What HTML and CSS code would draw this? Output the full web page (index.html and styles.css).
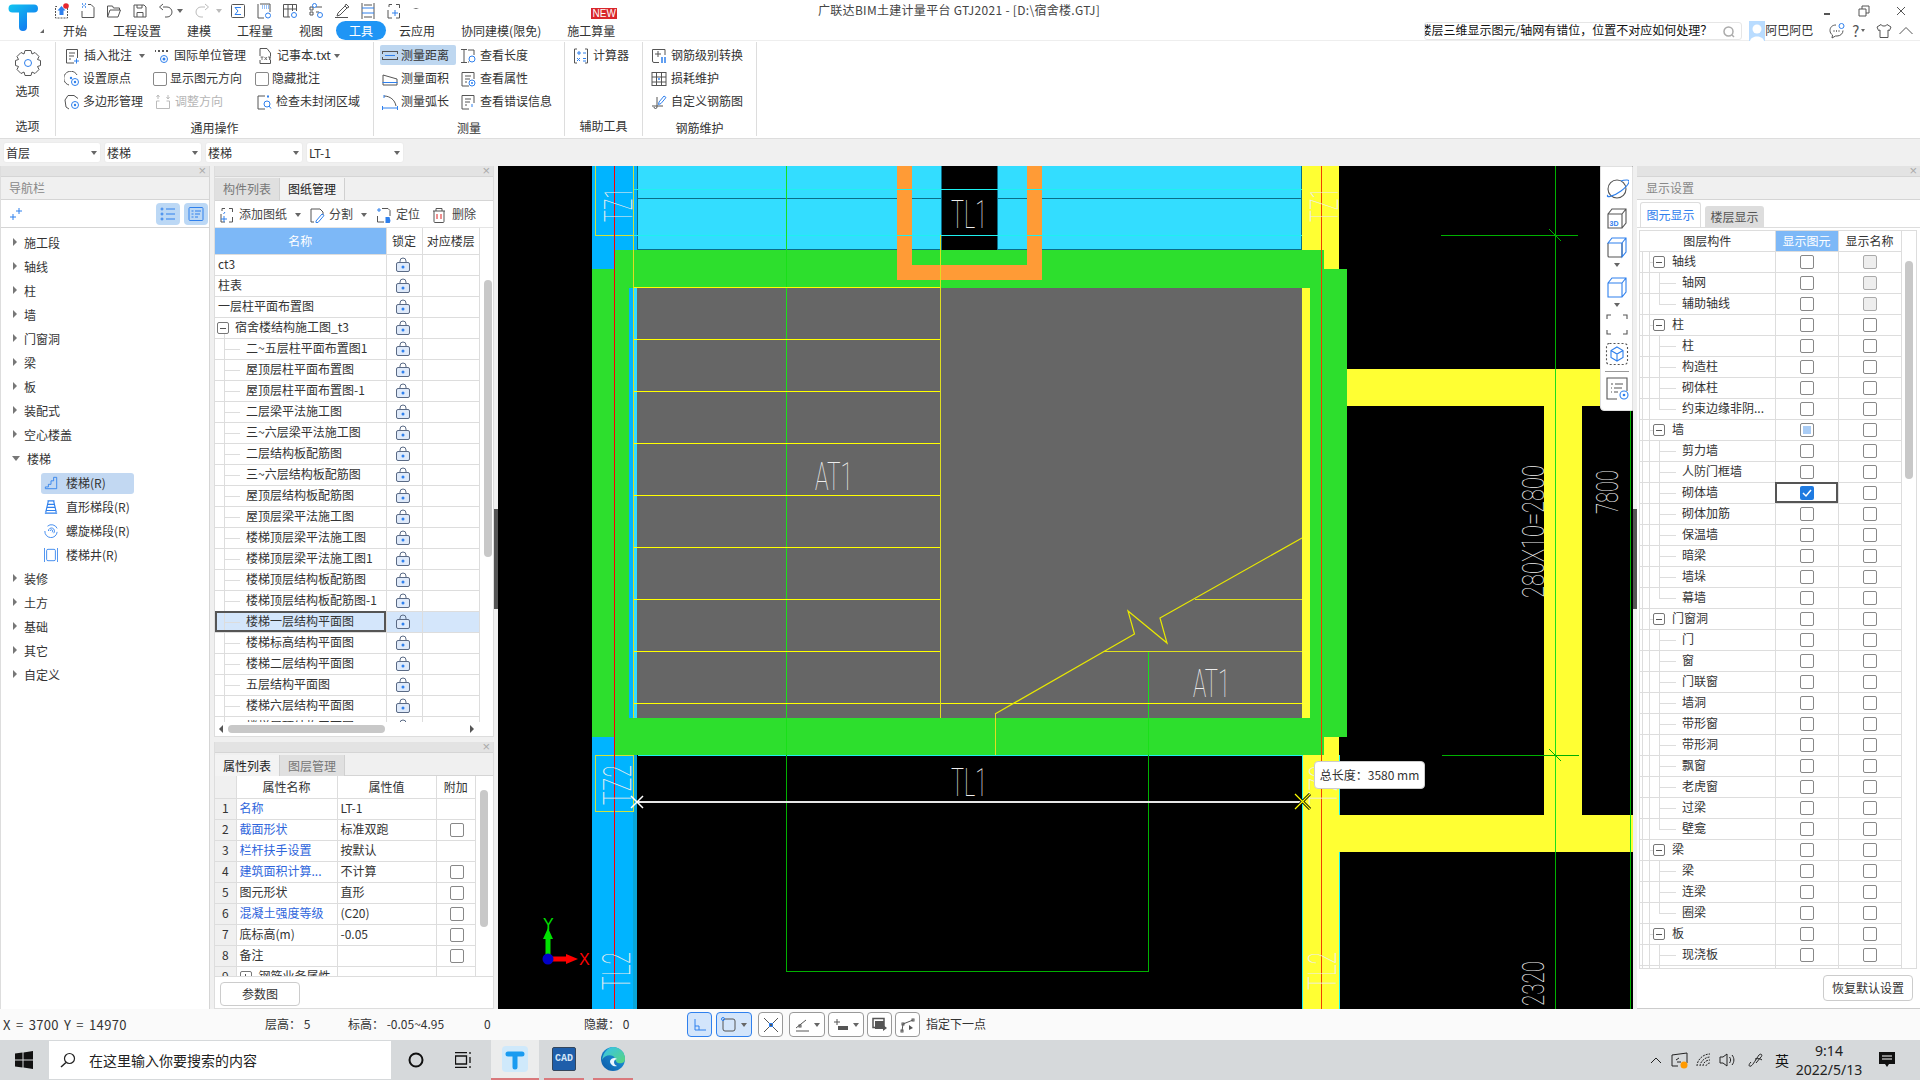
FILE: index.html
```html
<!DOCTYPE html>
<html lang="zh">
<head>
<meta charset="utf-8">
<title>广联达BIM土建计量平台 GTJ2021</title>
<link rel="stylesheet" href="styles.css">
</head>
<body>
<svg class="defs" width="0" height="0">
<defs>
<linearGradient id="tg" gradientUnits="userSpaceOnUse" x1="8" y1="4" x2="30" y2="32"><stop offset="0" stop-color="#12c8f0"/><stop offset="1" stop-color="#1272f0"/></linearGradient>
<linearGradient id="edge" x1="0" y1="1" x2="1" y2="0"><stop offset="0" stop-color="#0c59a4"/><stop offset="1" stop-color="#1fa0e8"/></linearGradient>
<linearGradient id="edgeg" x1="0" y1="0" x2="1" y2="1"><stop offset="0" stop-color="#35c1f1"/><stop offset="1" stop-color="#5ad67a"/></linearGradient>
<symbol id="lock" viewBox="0 0 14 15"><path class="ls" d="M4 6V4a3 3 0 0 1 6 0v2"/><rect class="lb" x=".5" y="5.5" width="13" height="9" rx="1.5"/><circle class="af" cx="7" cy="10" r="1.5"/></symbol>
<symbol id="note" viewBox="0 0 16 16"><path d="M10 15H2.500V1.500h11V10"/><path d="M5 5h6M5 8h5M5 11h2"/><path class="a" d="M12.500 10.500v5M10 13h5"/></symbol>
<symbol id="unit" viewBox="0 0 16 16"><circle class="a" cx="10" cy="11" r="3.500"/><circle class="af" cx="10" cy="11" r="1.500"/><path d="M1 3h1M4 3h2M8 3h2M12 3h2" stroke-width="2"/></symbol>
<symbol id="txt" viewBox="0 0 16 16"><path d="M3 15.500h10.500V5L10 .5H3z"/><path d="M1.500 8h12v4h-12z" fill="#fff" stroke="none"/><path d="M3.500 9h3M5 9v3M7.500 9l2.500 3M10 9l-2.500 3M11 9h3M12.500 9v3" stroke-width=".8"/></symbol>
<symbol id="origin" viewBox="0 0 16 16"><path d="M13 4A7 7 0 1 0 5 14"/><circle class="a" cx="11" cy="11" r="3.500"/><circle class="af" cx="11" cy="11" r="1.200"/><circle class="af" cx="7" cy="7" r="1.200"/></symbol>
<symbol id="poly" viewBox="0 0 16 16"><path d="M4 1.500h6l4 3M4 1.500 1 6l1 7 3 2"/><circle class="a" cx="11" cy="11" r="3.500"/><circle class="af" cx="11" cy="11" r="1.200"/></symbol>
<symbol id="adj" viewBox="0 0 16 16"><g style="stroke:#bbb"><path d="M1.500 7v7.500h13V7M1.500 7h3M11.500 7h3M3 1v4M1.500 3l1.500-2 1.500 2M13 1v4M11.500 3 13 5l1.500-2"/></g></symbol>
<symbol id="check" viewBox="0 0 16 16"><path d="M9 2H2v13h7"/><path d="M12 1.500v2" class="a" stroke-width="2"/><circle class="a" cx="11" cy="10" r="3"/><path class="a" d="m13 12 2 2.500"/></symbol>
<symbol id="dist" viewBox="0 0 16 16"><path d="M.5 4.500h15M.5 12.500h15"/><path d="M.5 4v3M15.500 4v3M.5 10v3M15.500 10v3"/><path class="a" d="M3 8.500h10"/></symbol>
<symbol id="len" viewBox="0 0 16 16"><path d="M1 1.500h6M1 14.500h6M4 1.500v13"/><path d="M8 2h6v5M8 14h1"/><circle class="a" cx="12" cy="11" r="3"/></symbol>
<symbol id="area" viewBox="0 0 16 16"><path d="M1 4v10h14V8z"/><path class="a" d="M.5 11.500h15"/></symbol>
<symbol id="prop" viewBox="0 0 16 16"><path d="M9 15H2V1.500h12V8"/><path d="M5 5h6M5 8h5M5 11h2"/><circle class="a" cx="12" cy="12" r="3"/><circle class="af" cx="12" cy="12" r="1"/></symbol>
<symbol id="arc" viewBox="0 0 16 16"><path d="M2 2c6 0 11 4 12 10"/><path class="a" d="M.5 14h15M.5 12v4M15.500 12v4M2 1v3"/></symbol>
<symbol id="err" viewBox="0 0 16 16"><path d="M14 9V1.500H2V15h7"/><path d="M5 5h6M5 8h5M5 11h2"/><path class="a" d="M12 10v3"/></symbol>
<symbol id="calc" viewBox="0 0 16 16"><path d="M4 1H1.500v14H4M12 1h2.500v14H12"/><path class="a" d="M6 3v4M4 5h4M10 5h3M4 10l3 3M7 10l-3 3M10 10.500h3M10 13h3"/></symbol>
<symbol id="grade" viewBox="0 0 16 16"><path d="M14 7V1.500H1.500V13a1.500 1.500 0 0 0 1.500 1.500h5"/><path d="M7 3v6M4 6h6"/><path class="a" d="M11 9v6M14 9v6" stroke-width="1.500"/></symbol>
<symbol id="grid" viewBox="0 0 16 16"><rect x="1" y="1.500" width="14" height="13"/><path d="M1 6h14M1 11h14M5.500 1.500v13M10.500 1.500v13"/><circle class="af" cx="8" cy="8" r="1"/></symbol>
<symbol id="rebar" viewBox="0 0 16 16"><path d="M6 3v10a1.500 1.500 0 0 1-3 0M1 12h11"/><path class="a" d="m8 8 5-6 2 1.500-5 6-2.500 1z"/></symbol>
<symbol id="addpg" viewBox="0 0 16 16"><path d="M3 4V1.500h3M10 1.500h3.500V5M13.500 10v5H10M6 15H2V7"/><path d="M6 5 4.500 7" class="a"/><path class="a" d="M5 9v6M2 12h6"/></symbol>
<symbol id="split" viewBox="0 0 16 16"><path d="M2 15V2h9l3 3v3M2 15h3"/><path class="a" d="m7 14 6-7 2 1.500-6 7H7z"/></symbol>
<symbol id="locate" viewBox="0 0 16 16"><path d="M6 1.500h6l2 2V9M1.500 9v6H8M14 15h-1"/><path class="a" d="M1 3h4M3 1v4"/><path class="af" d="M9.500 10h4l1 4-1 2h-4z"/></symbol>
<symbol id="del" viewBox="0 0 16 16"><path d="M2 4h12M5 4V1.500h6V4M3 4v10.500a1 1 0 0 0 1 1h8a1 1 0 0 0 1-1V4"/><path style="stroke:#e02020" d="M6 7v5M10 7v5"/></symbol>
<symbol id="stair" viewBox="0 0 16 16"><path class="a" d="M1.500 14.500h13V1.500h-3.500v4h-3v4h-3v3h-3.500z"/></symbol>
<symbol id="flight" viewBox="0 0 16 16"><path class="a" d="M4 1h8M5 1 2 14M11 1l3 13M1 15h14M4 5h8M3.500 8.500h9M2.500 12h11" stroke-width="1.300"/></symbol>
<symbol id="spiral" viewBox="0 0 16 16"><path class="a" d="M1 8a7 7 0 1 0 14 1M15 5a7 7 0 0 0-11-2.500M5 8a3.500 3.500 0 1 1 6 2.500M7 8a1.500 1.500 0 1 1 2 1.500"/></symbol>
<symbol id="well" viewBox="0 0 16 16"><path class="a" d="M.5 0v16M15.500 0v16"/><rect class="a" x="3" y="1.500" width="10" height="13" rx="1.500"/></symbol>
<symbol id="planet" viewBox="0 0 24 24"><circle cx="12" cy="12" r="9"/><path class="a" d="M3 18c-3 3 5 2 13-4s10-11 6-11-5 .5-6 1"/></symbol>
<symbol id="c3d" viewBox="0 0 24 24"><path d="M3 8h14v14H3zM3 8l4-5h14v14l-4 5M17 8l4-5"/><text class="t3d" x="4.500" y="20">3D</text></symbol>
<symbol id="cube" viewBox="0 0 24 24"><path d="M3 8v13a1 1 0 0 0 1 1h12a1 1 0 0 0 1-1V8"/><path class="a" d="M3 8l4-5h14v14l-4 5V8H3zM17 8l4-5"/></symbol>
<symbol id="cubef" viewBox="0 0 24 24"><path class="a" fill="#d3e5fb" d="M3 8l4-5h14v14l-4 5H3V8zM3 8h14v14M17 8l4-5"/></symbol>
<symbol id="corners" viewBox="0 0 24 24"><path d="M2 7V3h4M18 3h4v4M22 18v4h-4M6 22H2v-4"/></symbol>
<symbol id="cubed" viewBox="0 0 24 24"><rect x="1.500" y="1.500" width="21" height="21" rx="3" stroke-dasharray="2 2"/><path class="a" d="M12 5l6 3.500v7L12 19l-6-3.500v-7zM6 8.500l6 3.500 6-3.500M12 12v7"/></symbol>
<symbol id="report" viewBox="0 0 24 24"><path d="M12 23H2V2h20v13"/><path d="M6 8h2M10 8h8M6 12h1M9 12h8M6 16h1M9 16h4"/><circle class="a" cx="19" cy="19" r="4"/><circle class="af" cx="19" cy="19" r="1.300"/></symbol>
<symbol id="undo" viewBox="0 0 16 16"><path d="M6 4H10a5 5 0 0 1 0 10H8M6 1 2.500 4 6 7"/></symbol>
<symbol id="redo" viewBox="0 0 16 16"><g style="stroke:#bbb"><path d="M10 4H6a5 5 0 0 0 0 10h2M10 1l3.500 3L10 7"/></g></symbol>
</defs>
</svg>

<div class="app">
  <header class="top">
    <svg class="logo" viewBox="0 0 50 41" width="50" height="41"><path d="M12.500 8.500H34M23 9V27" fill="none" stroke="url(#tg)" stroke-width="8" stroke-linecap="round"/><path class="tiny" d="M40 33l4-4v4z"/></svg>
    <div class="top-main">
      <div class="qrow">
        <div class="quick">
          <span class="qi"><svg class="ic"><path d="M3 3.500H1.500V15h12V3.500H12" stroke-dasharray="2 1"/><path class="af" d="M7.500 3l4 4.500H9.500V12h-4V7.500h-2z"/><circle class="rd" cx="12" cy="3" r="2.800"/></svg></span>
          <span class="qi"><svg class="ic"><path d="M8 1.500h3l3 3v10H2V8"/><path class="a" d="M2 1h1M5 1h1M3.500 2.500h1M2 4h1M5 4h1" stroke-width="1.300"/></svg></span>
          <span class="qi"><svg class="ic"><path d="M1.500 14V3h5l1 2h6v2M1.500 14l2.500-7h10.500L12 14z"/></svg></span>
          <span class="qi"><svg class="ic"><path d="M2 2h10l2 2v10H2zM5 14V9.500h6V14M5 2v3h5V2"/></svg></span>
          <span class="qu"><svg class="ic"><use href="#undo"/></svg></span>
          <span class="qc"><i class="car"></i></span>
          <span class="qr"><svg class="ic"><use href="#redo"/></svg></span>
          <span class="qc2"><i class="car lt"></i></span>
          <span class="qi"><svg class="ic"><rect x="1.500" y="1.500" width="13" height="13" rx="1"/><path class="a" d="M11 4.500H5l3 3.500-3 3.500h6"/></svg></span>
          <span class="qi"><svg class="ic"><path d="M2 1v14h6M4 1h10v8"/><path class="a" d="M6 3h1M8 3h1M10 3h1M12 3h1M6 5h1M8 5h1M10 5h1M12 5h1"/><circle class="a" cx="12" cy="12.500" r="2.500"/></svg></span>
          <span class="qi"><svg class="ic"><path d="M8 14H1.500V1.500h13V8M1.500 6h13M6 1.500V14M10.500 1.500V8"/><circle class="a" cx="12" cy="12" r="2.500"/></svg></span>
          <span class="qi"><svg class="ic"><path d="M2 4h3v3H2zM2 9h3v3H2zM8 4h6M8 9h3"/><circle class="a" cx="6.500" cy="2.500" r="2"/><circle class="a" cx="12" cy="12" r="2.500"/></svg></span>
          <span class="qi"><svg class="ic"><path d="M1 14.500h13M3 13l1-3 7-7 2 2-7 7zM11 3l1-2 3 3-2 1"/></svg></span>
          <span class="qi"><svg class="ic"><path d="M2 0v16M14 0v16"/><path class="a" d="M2 5h12M2 10h12"/><path d="M4 2h8M4 14h8"/></svg></span>
          <span class="qi"><svg class="ic"><path d="M3 4V1.500h3M10 1.500h3.500V5M13.500 10v5H10M6 15H2V7"/><path class="a" d="M6 10h6M9 7v6"/></svg></span>
          <span class="qm"><i class="mc"></i></span>
        </div>
        <div class="title">广联达BIM土建计量平台 GTJ2021 - [D:\宿舍楼.GTJ]</div>
        <div class="win">
          <svg class="wi" viewBox="0 0 12 12" width="12" height="12"><path d="M3 9h6" stroke-width="2"/></svg>
          <svg class="wi" viewBox="0 0 12 12" width="12" height="12"><path d="M1 4h7v7H1zM4 4V1h7v7H8"/></svg>
          <svg class="wi" viewBox="0 0 12 12" width="12" height="12"><path d="M2 2l8 8M10 2l-8 8"/></svg>
        </div>
      </div>
      <div class="trow">
        <nav class="tabs">
          <span class="tab">开始</span><span class="tab">工程设置</span><span class="tab">建模</span><span class="tab">工程量</span><span class="tab">视图</span><span class="tab on">工具</span><span class="tab">云应用</span><span class="tab">协同建模(限免)</span><span class="tab badged">施工算量<b class="new">NEW</b></span>
        </nav>
        <div class="search"><span class="stext">楼层三维显示图元/轴网有错位，位置不对应如何处理？</span><svg class="sicon" viewBox="0 0 12 12" width="12" height="12"><circle cx="5.500" cy="5.500" r="4.500"/><path d="m9 9 2 2"/></svg></div>
        <svg class="avatar" viewBox="0 0 16 20" width="16" height="20"><rect width="16" height="20" fill="#b9dcff"/><circle cx="8" cy="8" r="4.500" fill="#fff"/><path d="M1 20c1-6 13-6 14 0z" fill="#fff"/></svg>
        <span class="uname">阿巴阿巴</span>
        <svg class="ic uic chat"><path d="M7 2C3 2 1 4.500 1 7.500c0 2 1 3.500 2.500 4.500L3 15l3.500-2H8c3.500 0 6-2.500 6-5.500"/><path d="M4.500 8h1M7 8h1M9.500 8h1" stroke-width="1.300"/><circle class="a" cx="12.500" cy="3" r="2.500"/></svg>
        <span class="help">?<i class="car sm"></i></span>
        <svg class="ic uic shirt"><path d="M5 1.500 1 4l1.500 3.500L4 7v7.500h8V7l1.500.5L15 4l-4-2.500c-.5 2-5.500 2-6 0z"/></svg>
        <svg class="ic uic up"><path d="M1.500 11 8 4.500 14.500 11"/></svg>
      </div>
    </div>
  </header>

  <section class="ribbon">
    <div class="rg rg1">
      <div class="rbody opt">
        <svg class="gear" viewBox="0 0 28 28" width="28" height="28"><path d="M11 1.500h6l1 3.500 3-1.500 4 4-1.500 3 3 1v5l-3 1 1.500 3-4 4-3-1.500-1 3.500h-6l-1-3.500-3 1.500-4-4 1.500-3-3-1v-5l3-1L3 7.500l4-4 3 1.500z"/><circle class="a" cx="14" cy="14" r="3.500"/></svg>
        <span class="ot">选项</span>
      </div>
      <div class="rl">选项</div>
    </div>
    <div class="rg rg2">
      <div class="rbody g3">
        <div class="ri i1"><svg class="ic"><use href="#note"/></svg><span>插入批注</span><i class="car"></i></div>
        <div class="ri i2"><svg class="ic"><use href="#unit"/></svg><span>国际单位管理</span></div>
        <div class="ri i3"><svg class="ic"><use href="#txt"/></svg><span>记事本.txt</span><i class="car"></i></div>
        <div class="ri i1"><svg class="ic"><use href="#origin"/></svg><span class="t2">设置原点</span></div>
        <div class="ri"><i class="cb"></i><span class="t3">显示图元方向</span></div>
        <div class="ri"><i class="cb"></i><span class="t3">隐藏批注</span></div>
        <div class="ri i1"><svg class="ic"><use href="#poly"/></svg><span class="t2">多边形管理</span></div>
        <div class="ri i2 dis"><svg class="ic"><use href="#adj"/></svg><span>调整方向</span></div>
        <div class="ri i3b"><svg class="ic"><use href="#check"/></svg><span>检查未封闭区域</span></div>
      </div>
      <div class="rl">通用操作</div>
    </div>
    <div class="rg rg3">
      <div class="rbody g2">
        <div class="ri hl"><svg class="ic"><use href="#dist"/></svg><span>测量距离</span></div>
        <div class="ri"><svg class="ic"><use href="#len"/></svg><span>查看长度</span></div>
        <div class="ri m"><svg class="ic"><use href="#area"/></svg><span>测量面积</span></div>
        <div class="ri"><svg class="ic"><use href="#prop"/></svg><span>查看属性</span></div>
        <div class="ri m"><svg class="ic"><use href="#arc"/></svg><span>测量弧长</span></div>
        <div class="ri"><svg class="ic"><use href="#err"/></svg><span>查看错误信息</span></div>
      </div>
      <div class="rl">测量</div>
    </div>
    <div class="rg rg4">
      <div class="rbody g1">
        <div class="ri"><svg class="ic"><use href="#calc"/></svg><span>计算器</span></div>
      </div>
      <div class="rl">辅助工具</div>
    </div>
    <div class="rg rg5">
      <div class="rbody g1">
        <div class="ri"><svg class="ic"><use href="#grade"/></svg><span>钢筋级别转换</span></div>
        <div class="ri"><svg class="ic"><use href="#grid"/></svg><span>损耗维护</span></div>
        <div class="ri"><svg class="ic"><use href="#rebar"/></svg><span>自定义钢筋图</span></div>
      </div>
      <div class="rl">钢筋维护</div>
    </div>
  </section>

  <section class="selbar">
    <div class="sel">首层<i class="car"></i></div>
    <div class="sel">楼梯<i class="car"></i></div>
    <div class="sel">楼梯<i class="car"></i></div>
    <div class="sel">LT-1<i class="car"></i></div>
  </section>

  <main class="main">
    <aside class="nav">
      <div class="strip"><span class="x">×</span></div>
      <div class="phead">导航栏</div>
      <div class="navtools">
        <svg class="ic spark"><path class="a" d="M10 2v6M7 5h6M4 8v6M1 11h6"/></svg>
        <span class="navb"><svg class="ic"><path class="a" d="M6 3h9M6 8h9M6 13h9"/><circle class="a" cx="2" cy="3" r="1"/><circle class="a" cx="2" cy="8" r="1"/><circle class="a" cx="2" cy="13" r="1"/></svg></span>
        <span class="navb"><svg class="ic"><rect class="a" x="1" y="1.500" width="14" height="13" rx="1"/><path class="a" d="M3.500 5h2M7 5h6M3.500 8h2M7 8h5M3.500 11h2M7 11h3"/></svg></span>
      </div>
      <div class="tree">
        <div class="ti"><i class="ar"></i>施工段</div>
        <div class="ti"><i class="ar"></i>轴线</div>
        <div class="ti"><i class="ar"></i>柱</div>
        <div class="ti"><i class="ar"></i>墙</div>
        <div class="ti"><i class="ar"></i>门窗洞</div>
        <div class="ti"><i class="ar"></i>梁</div>
        <div class="ti"><i class="ar"></i>板</div>
        <div class="ti"><i class="ar"></i>装配式</div>
        <div class="ti"><i class="ar"></i>空心楼盖</div>
        <div class="ti"><i class="ad"></i>楼梯</div>
        <div class="tsub"><span class="tsi sel-i"><svg class="ic"><use href="#stair"/></svg>楼梯(R)</span></div>
        <div class="tsub"><span class="tsi"><svg class="ic"><use href="#flight"/></svg>直形梯段(R)</span></div>
        <div class="tsub"><span class="tsi"><svg class="ic"><use href="#spiral"/></svg>螺旋梯段(R)</span></div>
        <div class="tsub"><span class="tsi"><svg class="ic"><use href="#well"/></svg>楼梯井(R)</span></div>
        <div class="ti"><i class="ar"></i>装修</div>
        <div class="ti"><i class="ar"></i>土方</div>
        <div class="ti"><i class="ar"></i>基础</div>
        <div class="ti"><i class="ar"></i>其它</div>
        <div class="ti"><i class="ar"></i>自定义</div>
      </div>
    </aside>

    <div class="mid">
      <section class="panel ptop">
        <div class="strip"><span class="x">×</span></div>
        <div class="ptabs"><span class="ptab">构件列表</span><span class="ptab act">图纸管理</span></div>
        <div class="dtools">
          <span class="dt d1"><svg class="ic"><use href="#addpg"/></svg>添加图纸<i class="car"></i></span>
          <span class="dt d2"><svg class="ic"><use href="#split"/></svg>分割<i class="car"></i></span>
          <span class="dt d3"><svg class="ic"><use href="#locate"/></svg>定位</span>
          <span class="dt d4"><svg class="ic"><use href="#del"/></svg>删除</span>
        </div>
        <div class="dwrap">
          <div class="dclip">
            <table class="tb dt-tb">
              <colgroup><col class="c171"><col class="c36"><col></colgroup>
              <thead><tr class="h25"><th class="blue">名称</th><th>锁定</th><th>对应楼层</th></tr></thead>
              <tbody>
                <tr><td class="r0">ct3</td><td class="cc"><svg class="lk"><use href="#lock"/></svg></td><td></td></tr>
                <tr><td class="r0">柱表</td><td class="cc"><svg class="lk"><use href="#lock"/></svg></td><td></td></tr>
                <tr><td class="r0">一层柱平面布置图</td><td class="cc"><svg class="lk"><use href="#lock"/></svg></td><td></td></tr>
                <tr><td class="r1"><i class="mn"></i>宿舍楼结构施工图_t3</td><td class="cc"><svg class="lk"><use href="#lock"/></svg></td><td></td></tr>
                <tr><td class="r2">二~五层柱平面布置图1</td><td class="cc"><svg class="lk"><use href="#lock"/></svg></td><td></td></tr>
                <tr><td class="r2">屋顶层柱平面布置图</td><td class="cc"><svg class="lk"><use href="#lock"/></svg></td><td></td></tr>
                <tr><td class="r2">屋顶层柱平面布置图-1</td><td class="cc"><svg class="lk"><use href="#lock"/></svg></td><td></td></tr>
                <tr><td class="r2">二层梁平法施工图</td><td class="cc"><svg class="lk"><use href="#lock"/></svg></td><td></td></tr>
                <tr><td class="r2">三~六层梁平法施工图</td><td class="cc"><svg class="lk"><use href="#lock"/></svg></td><td></td></tr>
                <tr><td class="r2">二层结构板配筋图</td><td class="cc"><svg class="lk"><use href="#lock"/></svg></td><td></td></tr>
                <tr><td class="r2">三~六层结构板配筋图</td><td class="cc"><svg class="lk"><use href="#lock"/></svg></td><td></td></tr>
                <tr><td class="r2">屋顶层结构板配筋图</td><td class="cc"><svg class="lk"><use href="#lock"/></svg></td><td></td></tr>
                <tr><td class="r2">屋顶层梁平法施工图</td><td class="cc"><svg class="lk"><use href="#lock"/></svg></td><td></td></tr>
                <tr><td class="r2">楼梯顶层梁平法施工图</td><td class="cc"><svg class="lk"><use href="#lock"/></svg></td><td></td></tr>
                <tr><td class="r2">楼梯顶层梁平法施工图1</td><td class="cc"><svg class="lk"><use href="#lock"/></svg></td><td></td></tr>
                <tr><td class="r2">楼梯顶层结构板配筋图</td><td class="cc"><svg class="lk"><use href="#lock"/></svg></td><td></td></tr>
                <tr><td class="r2">楼梯顶层结构板配筋图-1</td><td class="cc"><svg class="lk"><use href="#lock"/></svg></td><td></td></tr>
                <tr class="selr"><td class="r2 foc">楼梯一层结构平面图</td><td class="cc"><svg class="lk"><use href="#lock"/></svg></td><td></td></tr>
                <tr><td class="r2">楼梯标高结构平面图</td><td class="cc"><svg class="lk"><use href="#lock"/></svg></td><td></td></tr>
                <tr><td class="r2">楼梯二层结构平面图</td><td class="cc"><svg class="lk"><use href="#lock"/></svg></td><td></td></tr>
                <tr><td class="r2">五层结构平面图</td><td class="cc"><svg class="lk"><use href="#lock"/></svg></td><td></td></tr>
                <tr><td class="r2">楼梯六层结构平面图</td><td class="cc"><svg class="lk"><use href="#lock"/></svg></td><td></td></tr>
                <tr><td class="r2">楼梯屋顶结构平面图</td><td class="cc"><svg class="lk"><use href="#lock"/></svg></td><td></td></tr>
              </tbody>
            </table>
            <div class="vs vs1"><span></span></div>
          </div>
          <div class="hs"><i class="hl-a"></i><span></span><i class="hr-a"></i></div>
        </div>
      </section>
      <section class="panel pbot">
        <div class="strip"><span class="x">×</span></div>
        <div class="ptabs p2"><span class="ptab act">属性列表</span><span class="ptab">图层管理</span></div>
        <div class="pwrap">
          <table class="tb pr-tb">
            <colgroup><col class="c21"><col class="c101"><col class="c99"><col></colgroup>
            <thead><tr><th class="n"></th><th>属性名称</th><th>属性值</th><th>附加</th></tr></thead>
            <tbody>
              <tr><td class="n">1</td><td class="lnk">名称</td><td>LT-1</td><td></td></tr>
              <tr><td class="n">2</td><td class="lnk">截面形状</td><td>标准双跑</td><td class="cc"><i class="cb"></i></td></tr>
              <tr><td class="n">3</td><td class="lnk">栏杆扶手设置</td><td>按默认</td><td></td></tr>
              <tr><td class="n">4</td><td class="lnk">建筑面积计算...</td><td>不计算</td><td class="cc"><i class="cb"></i></td></tr>
              <tr><td class="n">5</td><td>图元形状</td><td>直形</td><td class="cc"><i class="cb"></i></td></tr>
              <tr><td class="n">6</td><td class="lnk">混凝土强度等级</td><td>(C20)</td><td class="cc"><i class="cb"></i></td></tr>
              <tr><td class="n">7</td><td>底标高(m)</td><td>-0.05</td><td class="cc"><i class="cb"></i></td></tr>
              <tr><td class="n">8</td><td>备注</td><td></td><td class="cc"><i class="cb"></i></td></tr>
              <tr><td class="n">9</td><td class="pl"><i class="mn plus"></i>钢筋业务属性</td><td></td><td></td></tr>
            </tbody>
          </table>
          <div class="vs vs2"><span></span></div>
        </div>
        <div class="pfoot"><button class="btn pbtn">参数图</button></div>
      </section>
    </div>

    <div class="split"><span></span></div>

    <div class="canvas">
      <svg class="cad" viewBox="498 166 1135 843" width="1135" height="843">
        <g shape-rendering="crispEdges">
          <rect class="fb" x="592" y="166" width="22" height="103"/><rect class="fb" x="614" y="166" width="23" height="84"/>
          <rect class="fb" x="592" y="737" width="22" height="272"/><rect class="fb" x="614" y="755" width="23" height="254"/>
          <rect class="ft" x="633" y="755" width="4" height="254"/>
          <rect class="fc" x="637" y="166" width="304" height="84"/><rect class="fc" x="998" y="166" width="304" height="84"/>
          <path class="tl" d="M638 198.500H941M998 198.500H1302M638 249.500H941M998 249.500H1302M637.500 166V250M1301.500 166V250M941.500 166V250M997.500 166V250"/>
          <rect class="fg" x="592" y="269" width="23" height="468"/><rect class="fg" x="614" y="250" width="710" height="38"/>
          <rect class="fg" x="615" y="288" width="22" height="430"/><rect class="fg" x="615" y="718" width="709" height="37"/>
          <rect class="fg" x="1310" y="288" width="14" height="430"/><rect class="fg" x="1324" y="269" width="23" height="468"/>
          <rect class="fb" x="629" y="288" width="4" height="430"/><rect class="fc" x="633" y="288" width="4" height="430"/>
          <rect class="fa" x="637" y="288" width="665" height="430"/>
          <rect class="fy" x="1302" y="288" width="8" height="430"/>
          <rect class="fy" x="1302" y="166" width="37" height="84"/><rect class="fy" x="1324" y="250" width="15" height="19"/>
          <rect class="fy" x="1302" y="755" width="37" height="254"/><rect class="fy" x="1324" y="737" width="15" height="18"/>
          <rect class="fy" x="1347" y="369" width="286" height="37"/><rect class="fy" x="1544" y="406" width="38" height="446"/><rect class="fy" x="1339" y="815" width="294" height="37"/>
          <path class="fo" d="M897 166h15v99h115V166h15v114H897z"/>
          <path class="cy" d="M633 189.500H1302M633 235.500H1302M637.500 755.500H1302M1302.500 755V1009M1339.500 755V815M1339.500 852V1009"/>
          <path class="gn" d="M786.500 166V755M1148.500 651V755M1555.500 369V852M1630.500 369V406M1630.500 815V852"/>
          <path class="gd" d="M1441 235.500H1578M1442 755.500H1579M1148.500 755V971.500H786.500V755M1555.500 166V369M1555.500 852V1009M1630.500 166V369M1630.500 406V815M1630.500 852V1009"/>
          <path class="yl" d="M633 287.500H940M633 339.500H940M633 391.500H940M633 443.500H940M633 495.500H940M633 547.500H940M633 599.500H940M633 651.500H940M633 703.500H1302"/>
          <path class="yt" d="M940.500 235V718M940 339.500V340M633.500 166V718M1195 599.500H1302M1104 651.500H1302M995.500 714V755"/>
          <rect class="yb" x="595.500" y="150" width="38" height="85"/><rect class="yb" x="595.500" y="755.500" width="38" height="56"/>
          <path class="rd1" d="M614.500 166V1009"/><path class="rd2" d="M1321.500 166V1009"/>
        </g>
        <path class="gd" d="M1549 229l12 12M1549 749l12 12"/>
        <path class="yd" d="M1302 538 1160 618l7 25-39-32 6.500 23L995 714"/>
        <text class="t" x="951" y="228" textLength="36" lengthAdjust="spacingAndGlyphs">TL1</text>
        <text class="t" x="951" y="796" textLength="36" lengthAdjust="spacingAndGlyphs">TL1</text>
        <text class="t" x="815" y="490" textLength="38" lengthAdjust="spacingAndGlyphs">AT1</text>
        <text class="t" x="1193" y="697" textLength="37" lengthAdjust="spacingAndGlyphs">AT1</text>
        <text class="t" transform="translate(632 222) rotate(-90)" textLength="34" lengthAdjust="spacingAndGlyphs">TZ1</text>
        <text class="t" transform="translate(1338 222) rotate(-90)" textLength="34" lengthAdjust="spacingAndGlyphs">TZ1</text>
        <text class="t" transform="translate(631 805) rotate(-90)" textLength="40" lengthAdjust="spacingAndGlyphs">TZ2</text>
        <text class="t" transform="translate(1337 805) rotate(-90)" textLength="40" lengthAdjust="spacingAndGlyphs">TZ2</text>
        <text class="t" transform="translate(630 990) rotate(-90)" textLength="38" lengthAdjust="spacingAndGlyphs">TL2</text>
        <text class="t" transform="translate(1336 990) rotate(-90)" textLength="38" lengthAdjust="spacingAndGlyphs">TL2</text>
        <text class="t s" transform="translate(1544 598) rotate(-90)" textLength="133" lengthAdjust="spacingAndGlyphs">280X10=2800</text>
        <text class="t s" transform="translate(1618 514) rotate(-90)" textLength="44" lengthAdjust="spacingAndGlyphs">7800</text>
        <text class="t s" transform="translate(1544 1006) rotate(-90)" textLength="45" lengthAdjust="spacingAndGlyphs">2320</text>
        <path class="wl" d="M637 802H1303"/>
        <path class="wx" d="M631 796l12 12M643 796l-12 12"/>
        <path class="yo" d="M1295 794l15 15M1310 794l-15 15"/>
        <path class="yx" d="M1295 794l15 15M1310 794l-15 15"/>
        <path class="ax-g" d="M548 958V938"/><path class="fgr" d="M548 928l5 11h-10z"/>
        <path class="ax-r" d="M548 959H567"/><path class="frd" d="M578 959l-12 5v-10z"/>
        <circle class="fbl" cx="548" cy="959" r="5.500"/>
        <text class="axt g" x="543" y="930">Y</text><text class="axt r" x="579" y="965">X</text>
      </svg>
      <div class="tip">总长度：3580 mm</div>
      <div class="vtools">
        <svg class="vi"><use href="#planet"/></svg>
        <svg class="vi"><use href="#c3d"/></svg>
        <svg class="vi"><use href="#cube"/></svg>
        <i class="car vc"></i>
        <svg class="vi"><use href="#cubef"/></svg>
        <i class="car vc"></i>
        <svg class="vi vcorn"><use href="#corners"/></svg>
        <svg class="vi"><use href="#cubed"/></svg>
        <span class="vsep"></span>
        <svg class="vi"><use href="#report"/></svg>
      </div>
    </div>

    <div class="split"><span></span></div>

    <aside class="right">
      <div class="strip"><span class="x">×</span></div>
      <div class="phead">显示设置</div>
      <div class="rtabs"><span class="rtab act">图元显示</span><span class="rtab">楼层显示</span></div>
      <div class="rwrap">
        <div class="rclip">
          <table class="tb ds">
            <colgroup><col class="c135"><col class="c63"><col class="c63"></colgroup>
            <thead><tr><th>图层构件</th><th class="blue">显示图元</th><th>显示名称</th></tr></thead>
            <tbody>
              <tr class="gp"><td><i class="mn"></i>轴线</td><td class="cc"><i class="cb"></i></td><td class="cc"><i class="cb off"></i></td></tr>
              <tr class="ch"><td>轴网</td><td class="cc"><i class="cb"></i></td><td class="cc"><i class="cb off"></i></td></tr>
              <tr class="ch last"><td>辅助轴线</td><td class="cc"><i class="cb"></i></td><td class="cc"><i class="cb off"></i></td></tr>
              <tr class="gp"><td><i class="mn"></i>柱</td><td class="cc"><i class="cb"></i></td><td class="cc"><i class="cb"></i></td></tr>
              <tr class="ch"><td>柱</td><td class="cc"><i class="cb"></i></td><td class="cc"><i class="cb"></i></td></tr>
              <tr class="ch"><td>构造柱</td><td class="cc"><i class="cb"></i></td><td class="cc"><i class="cb"></i></td></tr>
              <tr class="ch"><td>砌体柱</td><td class="cc"><i class="cb"></i></td><td class="cc"><i class="cb"></i></td></tr>
              <tr class="ch last"><td>约束边缘非阴...</td><td class="cc"><i class="cb"></i></td><td class="cc"><i class="cb"></i></td></tr>
              <tr class="gp"><td><i class="mn"></i>墙</td><td class="cc"><i class="cb part"></i></td><td class="cc"><i class="cb"></i></td></tr>
              <tr class="ch"><td>剪力墙</td><td class="cc"><i class="cb"></i></td><td class="cc"><i class="cb"></i></td></tr>
              <tr class="ch"><td>人防门框墙</td><td class="cc"><i class="cb"></i></td><td class="cc"><i class="cb"></i></td></tr>
              <tr class="ch"><td>砌体墙</td><td class="cc foc"><svg class="chk" viewBox="0 0 14 14" width="14" height="14"><rect width="14" height="14" rx="2"/><path d="m3 7 3 3 5-6"/></svg></td><td class="cc"><i class="cb"></i></td></tr>
              <tr class="ch"><td>砌体加筋</td><td class="cc"><i class="cb"></i></td><td class="cc"><i class="cb"></i></td></tr>
              <tr class="ch"><td>保温墙</td><td class="cc"><i class="cb"></i></td><td class="cc"><i class="cb"></i></td></tr>
              <tr class="ch"><td>暗梁</td><td class="cc"><i class="cb"></i></td><td class="cc"><i class="cb"></i></td></tr>
              <tr class="ch"><td>墙垛</td><td class="cc"><i class="cb"></i></td><td class="cc"><i class="cb"></i></td></tr>
              <tr class="ch last"><td>幕墙</td><td class="cc"><i class="cb"></i></td><td class="cc"><i class="cb"></i></td></tr>
              <tr class="gp"><td><i class="mn"></i>门窗洞</td><td class="cc"><i class="cb"></i></td><td class="cc"><i class="cb"></i></td></tr>
              <tr class="ch"><td>门</td><td class="cc"><i class="cb"></i></td><td class="cc"><i class="cb"></i></td></tr>
              <tr class="ch"><td>窗</td><td class="cc"><i class="cb"></i></td><td class="cc"><i class="cb"></i></td></tr>
              <tr class="ch"><td>门联窗</td><td class="cc"><i class="cb"></i></td><td class="cc"><i class="cb"></i></td></tr>
              <tr class="ch"><td>墙洞</td><td class="cc"><i class="cb"></i></td><td class="cc"><i class="cb"></i></td></tr>
              <tr class="ch"><td>带形窗</td><td class="cc"><i class="cb"></i></td><td class="cc"><i class="cb"></i></td></tr>
              <tr class="ch"><td>带形洞</td><td class="cc"><i class="cb"></i></td><td class="cc"><i class="cb"></i></td></tr>
              <tr class="ch"><td>飘窗</td><td class="cc"><i class="cb"></i></td><td class="cc"><i class="cb"></i></td></tr>
              <tr class="ch"><td>老虎窗</td><td class="cc"><i class="cb"></i></td><td class="cc"><i class="cb"></i></td></tr>
              <tr class="ch"><td>过梁</td><td class="cc"><i class="cb"></i></td><td class="cc"><i class="cb"></i></td></tr>
              <tr class="ch last"><td>壁龛</td><td class="cc"><i class="cb"></i></td><td class="cc"><i class="cb"></i></td></tr>
              <tr class="gp"><td><i class="mn"></i>梁</td><td class="cc"><i class="cb"></i></td><td class="cc"><i class="cb"></i></td></tr>
              <tr class="ch"><td>梁</td><td class="cc"><i class="cb"></i></td><td class="cc"><i class="cb"></i></td></tr>
              <tr class="ch"><td>连梁</td><td class="cc"><i class="cb"></i></td><td class="cc"><i class="cb"></i></td></tr>
              <tr class="ch last"><td>圈梁</td><td class="cc"><i class="cb"></i></td><td class="cc"><i class="cb"></i></td></tr>
              <tr class="gp"><td><i class="mn"></i>板</td><td class="cc"><i class="cb"></i></td><td class="cc"><i class="cb"></i></td></tr>
              <tr class="ch"><td>现浇板</td><td class="cc"><i class="cb"></i></td><td class="cc"><i class="cb"></i></td></tr>
              <tr class="ch"><td></td><td class="cc"><i class="cb"></i></td><td class="cc"><i class="cb"></i></td></tr>
            </tbody>
          </table>
          <div class="vs vs3"><span></span></div>
        </div>
        <div class="rfoot"><button class="btn rbtn">恢复默认设置</button></div>
      </div>
    </aside>
  </main>

  <footer class="status">
    <span class="st s1">X = 3700 Y = 14970</span>
    <span class="st s2">层高：&nbsp;5</span>
    <span class="st s3">标高：&nbsp;-0.05~4.95</span>
    <span class="st s4">0</span>
    <span class="st s5">隐藏：&nbsp;0</span>
    <div class="sbtns">
      <span class="sb w25 on"><svg class="ic"><path class="a" d="M3 2v11h11M3 9h4v4"/></svg></span>
      <span class="sb w36 on"><svg class="ic"><rect x="2" y="2" width="12" height="12" rx="2"/><circle class="a" cx="2" cy="2" r="1.500" fill="#d3e5fb"/></svg><i class="car"></i></span>
      <span class="sb w25 wide"><svg class="ic"><path d="M1 1l14 14M15 1 1 15"/><rect class="a" x="6.500" y="6.500" width="3" height="3" fill="#fff"/></svg></span>
      <span class="sb w36 wide"><svg class="ic"><path d="M2 11 12 3"/><path d="M2 14h13" stroke="#aaa" stroke-width="2"/><rect x="5" y="8" width="2" height="2"/></svg><i class="car"></i></span>
      <span class="sb w36"><svg class="ic"><path d="M4 2v6M1 5h6"/><rect class="fdk" x="5" y="9" width="10" height="4"/></svg><i class="car"></i></span>
      <span class="sb w25"><svg class="ic"><path d="M1 1.500h11v9H1z" stroke-width="1.500"/><rect class="fdk" x="3" y="4" width="9" height="8"/><path class="fdk" d="M11 8l4 3-4 3z"/></svg></span>
      <span class="sb w25"><svg class="ic"><path d="M2 14 3 7l10-4"/><rect x="1" y="13" width="2" height="2"/><rect x="2" y="6" width="2" height="2"/><rect x="12" y="2" width="2" height="2"/><path class="fdk" d="M9 8l4 3-4 2z"/></svg></span>
    </div>
    <span class="st s6">指定下一点</span>
  </footer>

  <footer class="taskbar">
    <svg class="win10" viewBox="0 0 18 18" width="18" height="18"><path d="M0 2.500 7.500 1.500V8.500H0zM8.500 1.400 18 0V8.500H8.500zM0 9.500H7.500V16.500L0 15.500zM8.500 9.500H18V18L8.500 16.600z"/></svg>
    <div class="tsearch"><svg class="tmag" viewBox="0 0 16 16" width="16" height="16"><circle cx="9.500" cy="6.500" r="5"/><path d="M6 10.500 1 15" stroke-width="1.500"/></svg><span>在这里输入你要搜索的内容</span></div>
    <svg class="cortana" viewBox="0 0 16 16" width="16" height="16"><circle cx="8" cy="8" r="6.500"/></svg>
    <svg class="tview" viewBox="0 0 18 16" width="18" height="16"><path d="M0 .5h12M0 15.500h12M.5 4h11v8H.5zM15 0v2M15 5v6M15 14v2" stroke-width="1.300"/></svg>
    <div class="apps">
      <span class="app-i act"><svg viewBox="0 0 26 26" width="26" height="26"><rect width="26" height="26" rx="4" fill="#cfe9fb"/><path d="M6 8H20M13 8V21" fill="none" stroke="#1a9bf0" stroke-width="5" stroke-linecap="round"/></svg></span>
      <span class="app-i run"><span class="cadi">CAD</span></span>
      <span class="app-i run"><svg viewBox="0 0 26 26" width="26" height="26"><circle cx="13" cy="13" r="12" fill="url(#edge)"/><path d="M13 1a12 12 0 0 1 12 12c0 4-4 5-7 4-3-1-2-5-5-7-4-2-9 0-11 4C3 7 8 1 13 1z" fill="url(#edgeg)"/><path d="M10 15c1-3 5-4 7-2-1 0-3 1-3 3 0 2 1 3 3 4-3 1-7-1-7-5z" fill="#eaf7ff"/></svg></span>
    </div>
    <div class="tray">
      <svg class="ti-t chev" viewBox="0 0 12 8" width="12" height="8"><path d="M1 7 6 2l5 5"/></svg>
      <svg class="ti-t tbx" viewBox="0 0 18 18" width="18" height="18"><path d="M1 4 16 2v10M1 4v11h6"/><path d="M5 9l3-2M10 11H6"/><circle class="dot" cx="13" cy="14" r="3.500"/></svg>
      <svg class="ti-t wifi" viewBox="0 0 16 16" width="16" height="16"><path d="M1 14C1 8 7 2 14 2M4 14c0-4 5-9 10-9M7 14c0-3 3-6 7-6M10 14c0-1 2-3 4-3" stroke-dasharray="2 1"/></svg>
      <svg class="ti-t vol" viewBox="0 0 18 16" width="18" height="16"><path d="M1 5h3l4-3v12l-4-3H1zM10.500 5c1.500 2 1.500 4 0 6M13 3c2.500 3 2.500 7 0 10"/></svg>
      <svg class="ti-t pen" viewBox="0 0 16 16" width="16" height="16"><path d="M3 10c-3 3-2 5 0 4s5-7 8-11c2-2 4 0 2 2l-5 6M7 7c3-1 6 0 7 1"/></svg>
      <span class="ime">英</span>
      <div class="clock"><span>9:14</span><span>2022/5/13</span></div>
      <svg class="nt" viewBox="0 0 18 18" width="18" height="18"><path class="nb" d="M1 1h16v12h-6l-2 3-2-3H1z"/><path class="nl" d="M4 5h10M4 8h10"/></svg>
    </div>
  </footer>
</div>
</body>
</html>
```

FILE: styles.css
```css
* { box-sizing: border-box; }
html, body { margin: 0; padding: 0; width: 1920px; height: 1080px; overflow: hidden; }
body { font: 12px/1.2 "Noto Sans CJK SC", "Noto Sans", sans-serif; color: #333; background: #f0f0f0; }
i { display: inline-block; font-style: normal; }
.defs { position: absolute; }
.app { width: 1920px; height: 1080px; display: flex; flex-direction: column; }

/* icons */
.ic { width: 16px; height: 16px; flex: none; fill: none; stroke: #555; stroke-width: 1; }
.a { stroke: #2f80ed; fill: none; }
.af { fill: #2f80ed; stroke: none; }
.rd { fill: #e8262c; stroke: none; }
.fdk { fill: #555; stroke: none; }
.t3d { font: bold 7px "Liberation Sans", sans-serif; fill: #2f80ed; stroke: none; }

.car { width: 0; height: 0; border-left: 3px solid transparent; border-right: 3px solid transparent; border-top: 4px solid #666; }
.car.lt { border-top-color: #bbb; }
.mc { width: 6px; height: 5px; border-top: 1px solid #666; position: relative; border-left: 3px solid transparent; border-right: 3px solid transparent; }
.cb { width: 14px; height: 14px; border: 1px solid #888; border-radius: 2px; background: #fff; vertical-align: middle; }
.cb.off { background: #eee; border-color: #aaa; }
.cb.part { background: #a9ccf5; box-shadow: inset 0 0 0 2px #fff; }
.mn { width: 12px; height: 12px; border: 1px solid #777; border-radius: 2px; background: linear-gradient(#555, #555) center / 6px 1px no-repeat #fff; vertical-align: -2px; }
.mn.plus { background: linear-gradient(#555, #555) center / 6px 1px no-repeat, linear-gradient(#555, #555) center / 1px 6px no-repeat, #fff; }

/* top */
.top { height: 41px; background: #fff; display: flex; flex: none; border-bottom: 1px solid #eee; }
.logo { flex: none; }
.tiny { fill: #666; }
.top-main { flex: 1; display: flex; flex-direction: column; margin-left: 0; min-width: 0; }
.qrow { height: 21px; display: flex; align-items: center; margin-left: -1px; }
.quick { width: 769px; display: flex; align-items: center; flex: none; }
.qi { width: 26px; display: flex; justify-content: center; flex: none; }
.qu { width: 20px; margin-left: 2px; display: flex; justify-content: center; flex: none; }
.qc { width: 10px; display: flex; justify-content: center; flex: none; }
.qr { width: 26px; margin-left: 5px; display: flex; justify-content: center; flex: none; }
.qc2 { width: 10px; margin-left: -2px; margin-right: 1px; display: flex; justify-content: center; flex: none; }
.qm { width: 18px; display: flex; justify-content: center; flex: none; }
.title { color: #444; white-space: nowrap; letter-spacing: .3px; }
.win { margin-left: auto; display: flex; gap: 25px; padding-right: 13px; }
.wi { fill: none; stroke: #555; stroke-width: 1; }
.trow { height: 19px; display: flex; align-items: center; }
.tabs { display: flex; height: 19px; align-items: center; }
.tab { padding: 0 13px; height: 19px; line-height: 19px; white-space: nowrap; }
.tab.on { background: #1f95f5; color: #fff; border-radius: 10px; }
.badged { position: relative; }
.new { position: absolute; left: 37px; top: -13px; width: 26px; height: 11px; background: #d9262c; color: #fff; font: 10px/11px "Liberation Sans", sans-serif; text-align: center; }
.search { margin-left: 796px; width: 318px; height: 18px; border: 1px solid #e6e6e6; border-radius: 3px; display: flex; align-items: center; justify-content: flex-end; overflow: hidden; padding-right: 29px; position: relative; color: #111; flex: none; }
.stext { white-space: nowrap; flex: none; }
.sicon { position: absolute; right: 6px; top: 3px; fill: none; stroke: #aaa; stroke-width: 1.500; }
.avatar { margin-left: 7px; flex: none; }
.uname { width: 48px; flex: none; }
.uic.chat { margin-left: 16px; }
.help { margin-left: 3px; width: 21px; display: flex; align-items: center; justify-content: center; gap: 2px; font-size: 15px; color: #555; }
.car.sm { border-left-width: 2px; border-right-width: 2px; border-top-width: 3px; }
.shirt { margin-left: 7px; }
.up { margin-left: 6px; }

/* ribbon */
.ribbon { height: 98px; background: #fff; display: flex; flex: none; border-bottom: 1px solid #ddd; }
.rg { display: flex; flex-direction: column; padding-top: 2px; position: relative; height: 94px; margin-top: 1px; border-right: 1px solid #ddd; flex: none; }
.rg1 { width: 56px; }
.rg2 { width: 318px; }
.rg3 { width: 191px; }
.rg4 { width: 78px; }
.rg5 { width: 114px; }
.rbody { height: 69px; }
.rl { height: 20px; line-height: 20px; text-align: center; margin-top: 5px; }
.opt { display: flex; flex-direction: column; align-items: center; }
.gear { fill: none; stroke: #555; margin-top: 5px; }
.ot { margin-top: 7px; }
.g3 { display: grid; grid-template-columns: 89px 102px 1fr; grid-auto-rows: 23px; padding-left: 8px; }
.g2 { display: grid; grid-template-columns: 80px 1fr; grid-auto-rows: 23px; padding-left: 6px; }
.g1 { display: grid; grid-auto-rows: 23px; padding-left: 8px; }
.ri { display: flex; align-items: center; gap: 4px; white-space: nowrap; }
.ri .car { margin-left: 1px; }
.i1 .car { margin-left: 3px; }
.i3 .car { margin-left: -1px; }
.t2 { margin-left: -1px; }
.g3 .ri:nth-child(2) { padding-left: 1px; }
.g3 .ri:nth-child(8) { padding-left: 2px; }
.g3 .ri:nth-child(3) { padding-left: 2px; }
.g3 .ri:nth-child(9) { padding-left: 1px; }
.g3 .cb { margin-left: 0; }
.t3 { margin-left: -1px; }
.dis { color: #b5b5b5; }
.hl { background: #bed7f0; border-radius: 2px; width: 76px; height: 20px; padding-left: 2px; gap: 3px; margin-top: 1px; }
.g2 .ri.m { padding-left: 2px; gap: 3px; }

/* selectors */
.selbar { height: 27px; flex: none; display: flex; gap: 3px; padding: 3px 0 0 3px; background: #f0f0f0; }
.sel { width: 98px; height: 21px; background: #fff; border-radius: 3px; padding-left: 2px; line-height: 19px; display: flex; align-items: center; justify-content: space-between; padding-right: 3px; border: 1px solid #ececec; }

/* main */
.main { height: 843px; flex: none; display: flex; background: #f0f0f0; }
.nav { width: 210px; flex: none; background: #fff; border-right: 1px solid #d5d5d5; display: flex; flex-direction: column; margin-right: 4px; border-left: 1px solid #ddd; }
.strip { height: 11px; background: #e3e3e3; display: flex; justify-content: flex-end; flex: none; border-bottom: 1px solid #d5d5d5; }
.x { font: 13px/10px "Liberation Sans", sans-serif; color: #aaa; padding-right: 3px; }
.phead { height: 23px; line-height: 22px; background: #f0f0f0; color: #888; padding-left: 8px; border-bottom: 1px solid #d5d5d5; flex: none; font-size: 12px; }
.navtools { height: 28px; display: flex; align-items: center; padding: 0 1px 0 8px; border-bottom: 1px solid #d5d5d5; flex: none; gap: 4px; }
.spark { margin-right: auto; }
.navb { width: 24px; height: 22px; background: #bcd8f5; border-radius: 4px; display: flex; align-items: center; justify-content: center; }
.tree { padding-top: 3px; }
.ti { height: 24px; display: flex; align-items: center; padding-left: 12px; }
.ar { width: 0; height: 0; border-top: 4px solid transparent; border-bottom: 4px solid transparent; border-left: 4px solid #777; margin-right: 7px; margin-top: -2px; }
.ad { width: 0; height: 0; border-left: 4px solid transparent; border-right: 4px solid transparent; border-top: 5px solid #777; margin-right: 7px; margin-left: -1px; margin-top: -2px; }
.tsub { height: 24px; display: flex; align-items: center; padding-left: 40px; }
.tsi { display: flex; align-items: center; gap: 8px; width: 93px; height: 21px; padding-left: 3px; border-radius: 3px; white-space: nowrap; }
.tsi .ic { width: 14px; height: 14px; }
.sel-i { background: #c2d8f2; }

.mid { width: 280px; flex: none; display: flex; flex-direction: column; gap: 5px; }
.panel { background: #fff; border: 1px solid #ddd; border-top: 0; display: flex; flex-direction: column; overflow: hidden; }
.ptop { height: 571px; }
.pbot { height: 267px; }
.ptabs { height: 24px; background: #f0f0f0; display: flex; border-bottom: 1px solid #d5d5d5; padding-top: 1px; flex: none; }
.ptab { width: 65px; height: 22px; text-align: center; line-height: 22px; color: #777; background: #e0e0e0; border-right: 1px solid #d0d0d0; font-size: 12px; }
.ptab.act { background: #f3f3f3; color: #222; }
.dtools { height: 27px; display: flex; align-items: center; flex: none; border-bottom: 1px solid #e5e5e5; padding: 1px 0 0 4px; }
.dt { display: flex; align-items: center; gap: 4px; white-space: nowrap; color: #444; }
.d1 { width: 90px; }
.d1 .car { margin-left: 4px; }
.d2 { width: 67px; }
.d2 .car { margin-left: 4px; }
.d3 { width: 55px; }
.d4 { gap: 5px; }
.dwrap { flex: 1; display: flex; flex-direction: column; min-height: 0; }
.dclip { height: 494px; display: flex; overflow: hidden; flex: none; }
.hs { height: 14px; display: flex; align-items: center; padding: 0 19px 0 4px; }
.hl-a { border-top: 4px solid transparent; border-bottom: 4px solid transparent; border-right: 4px solid #555; width: 0; }
.hr-a { border-top: 4px solid transparent; border-bottom: 4px solid transparent; border-left: 4px solid #555; width: 0; margin-left: auto; }
.hs span { width: 157px; height: 8px; background: #c8c8c8; border-radius: 4px; margin-left: 5px; }
.tb { border-collapse: collapse; table-layout: fixed; background: #fff; flex: none; }
.tb th { font-weight: normal; height: 21px; padding: 0; border-bottom: 1px solid #ddd; border-right: 1px solid #ddd; text-align: center; }
.tb td { height: 21px; padding: 0; border-bottom: 1px solid #ddd; border-right: 1px solid #ddd; white-space: nowrap; overflow: hidden; }
.tb th.blue { background: #7db8f7; color: #fff; }
.dt-tb { width: 265px; }
.c171 { width: 171px; } .c36 { width: 36px; } .c21 { width: 21px; } .c101 { width: 101px; } .c99 { width: 99px; }
.c135 { width: 135px; } .c63 { width: 63px; }
.h25 th { height: 26px; }
.cc { text-align: center; }
.lk { width: 14px; height: 15px; display: inline-block; vertical-align: middle; margin: -2px 2px 0 0; fill: none; }
.ls { stroke: #5a6a85; fill: none; }
.lb { stroke: #5a6a85; fill: #dfeafa; }
.r0 { padding-left: 3px !important; }
.r1 { padding-left: 2px !important; background: linear-gradient(#ddd, #ddd) 9px 14px / 1px 7px no-repeat; }
.r1 .mn { margin-right: 6px; }
.r2 { padding-left: 31px !important; background: linear-gradient(#ddd, #ddd) 9px 0 / 1px 100% no-repeat, linear-gradient(#ddd, #ddd) 9px 10px / 16px 1px no-repeat; }
.selr td { background-color: #d4e6fb; }
.vs { width: 15px; flex: none; display: flex; justify-content: center; }
.vs span { width: 8px; background: #c8c8c8; border-radius: 4px; }
.vs1 span { height: 277px; margin-top: 52px; }
.vs2 span { height: 137px; margin-top: 14px; }
.vs3 { width: 14px; }
.vs3 span { height: 218px; margin-top: 30px; }

.p2 { height: 23px; padding-top: 2px; }
.p2 .ptab { height: 21px; line-height: 21px; }
.pwrap { height: 201px; display: flex; overflow: hidden; flex: none; border-bottom: 1px solid #ddd; }
.pr-tb { width: 261px; }
.pr-tb th { height: 22px; }
.pr-tb th.n, .pr-tb td.n { background: #f0f0f0; text-align: center; }
.pr-tb td { padding-left: 3px; }
.pr-tb td.n { padding-left: 0; }
.lnk { color: #2f66dc; }
.pl .mn { margin-right: 7px; }
.pfoot { padding: 5px 0 0 5px; }
.btn { font: inherit; color: #333; background: #fff; border: 1px solid #ccc; border-radius: 4px; padding: 0; height: 24px; }
.pbtn { width: 80px; }

.split { width: 4px; flex: none; background: #f0f0f0; display: flex; align-items: center; }
.split span { width: 4px; height: 100px; background: #555; margin-top: -57px; }

.canvas { width: 1135px; flex: none; background: #000; position: relative; overflow: hidden; }
.cad { display: block; }
.fb { fill: #00b4ff; } .fc { fill: #33ddff; } .fg { fill: #2ddf2d; } .fa { fill: #666; } .fy { fill: #ffff33; } .fo { fill: #ff9b36; } .ft { fill: #08a5d8; }
.tl { stroke: #0a6e8a; fill: none; }
.cy { stroke: #1ef0f0; fill: none; }
.gn { stroke: #19e019; fill: none; }
.gd { stroke: #00b000; fill: none; }
.yl { stroke: #ffff00; fill: none; }
.yt { stroke: #dede20; fill: none; }
.yb { stroke: #cfe23a; fill: none; }
.yd { stroke: #e8e800; fill: none; stroke-width: 1.200; }
.rd1 { stroke: #ff0000; }
.rd2 { stroke: #f04000; }
.t { font: 100 38px Roboto, "Liberation Sans", sans-serif; fill: #eee; }
.t.s { font-size: 32px; }
.wl { stroke: #e6e6e6; stroke-width: 2; }
.wx { stroke: #fff; stroke-width: 1.500; }
.yo { stroke: #000; stroke-width: 3; }
.yx { stroke: #ffff00; stroke-width: 1.200; }
.ax-g { stroke: #00e000; stroke-width: 5; }
.ax-r { stroke: #ff0000; stroke-width: 5; }
.fgr { fill: #00e000; } .frd { fill: #ff0000; } .fbl { fill: #0000c8; }
.axt { font: 16px "Liberation Sans", sans-serif; }
.axt.g { fill: #00e000; } .axt.r { fill: #ff0000; }
.tip { position: absolute; left: 816px; top: 595px; width: 111px; height: 28px; background: #fff; border: 1px solid #ccc; border-radius: 4px; line-height: 26px; text-align: center; white-space: nowrap; color: #333; }
.vtools { position: absolute; right: 0; top: 0; width: 33px; height: 245px; background: #fff; border: 1px solid #e0e0e0; border-radius: 0 0 0 4px; display: flex; flex-direction: column; align-items: center; padding-top: 10px; }
.vi { width: 24px; height: 24px; fill: none; stroke: #555; stroke-width: 1.100; flex: none; margin-bottom: 5px; }
.vc { margin: -1px 0 8px; }
.vc + .vi + .vc { margin-bottom: 5px; }
.vi.vcorn { margin-bottom: 6px; }
.vsep { width: 24px; height: 1px; background: #999; margin: 0 0 4px; flex: none; }

.right { width: 283px; flex: none; background: #fff; display: flex; flex-direction: column; border-bottom: 1px solid #ccc; }
.right .phead { padding-left: 9px; }
.rtabs { height: 28px; padding: 3px 0 0 3px; display: flex; gap: 4px; align-items: flex-end; flex: none; border-bottom: 1px solid #ddd; }
.rtab { width: 59px; height: 21px; line-height: 21px; text-align: center; background: #ddd; border-radius: 3px 3px 0 0; color: #555; }
.rtab.act { width: 61px; height: 25px; line-height: 23px; background: #fff; border: 1px solid #ddd; border-bottom: 0; color: #2f80ed; }
.rwrap { flex: 1; display: flex; flex-direction: column; padding: 2px 3px 0 2px; min-height: 0; }
.rclip { height: 739px; display: flex; overflow: hidden; flex: none; border: 1px solid #ddd; border-width: 1px 1px 1px 1px; }
.ds { width: 261px; }
.ds th { height: 20px; }
.ds .gp td:first-child { padding-left: 13px; background: linear-gradient(#ddd, #ddd) 9px 0 / 1px 100% no-repeat, linear-gradient(#ddd, #ddd) 2px 0 / 1px 100% no-repeat, linear-gradient(#ddd, #ddd) 9px 10px / 4px 1px no-repeat; }
.ds .gp .mn { margin-right: 7px; }
.ds .ch td:first-child { padding-left: 42px; background: linear-gradient(#ddd, #ddd) 2px 0 / 1px 100% no-repeat, linear-gradient(#ddd, #ddd) 9px 0 / 1px 100% no-repeat, linear-gradient(#ddd, #ddd) 19px 0 / 1px 100% no-repeat, linear-gradient(#ddd, #ddd) 19px 10px / 17px 1px no-repeat; }
.ds .ch.last td:first-child { background: linear-gradient(#ddd, #ddd) 2px 0 / 1px 100% no-repeat, linear-gradient(#ddd, #ddd) 9px 0 / 1px 100% no-repeat, linear-gradient(#ddd, #ddd) 19px 0 / 1px 11px no-repeat, linear-gradient(#ddd, #ddd) 19px 10px / 17px 1px no-repeat; }
.tb td.foc { outline: 2px solid #555; outline-offset: -2px; }
.chk { vertical-align: middle; }
.chk rect { fill: #1f7ae0; }
.chk path { fill: none; stroke: #fff; stroke-width: 1.500; }
.rfoot { display: flex; justify-content: flex-end; padding: 6px 4px 0 0; }
.rbtn { width: 90px; height: 26px; }

/* status */
.status { height: 31px; flex: none; background: #fafafa; display: flex; align-items: center; position: relative; }
.st { white-space: nowrap; flex: none; }
.s1 { margin-left: 3px; width: 262px; font-size: 13px; letter-spacing: .3px; word-spacing: 2px; }
.s2 { width: 83px; }
.s3 { width: 136px; }
.s4 { width: 100px; }
.s5 { width: 103px; }
.sbtns { display: flex; gap: 3px; flex: none; }
.sb { height: 25px; border: 1px solid #999; border-radius: 4px; background: #fff; display: flex; align-items: center; justify-content: center; gap: 4px; }
.sb.on { background: #d3e5fb; border-color: #2f80ed; }
.sb.on + .sb.on { margin-left: 1px; }
.sb.wide { margin-left: 3px; }
.w25 { width: 25px; } .w36 { width: 36px; }
.s6 { margin-left: 6px; }

/* taskbar */
.taskbar { height: 40px; flex: none; background: #d6d9db; display: flex; align-items: center; padding-left: 15px; }
.win10 { fill: #111; flex: none; }
.tsearch { margin-left: 16px; width: 342px; height: 38px; background: #fff; display: flex; align-items: center; padding-left: 11px; gap: 13px; font-size: 14px; color: #222; flex: none; }
.tmag { fill: none; stroke: #222; stroke-width: 1.200; flex: none; }
.tsearch span { font-size: 14px; }
.cortana { margin-left: 17px; fill: none; stroke: #111; stroke-width: 2; flex: none; }
.tview { margin-left: 31px; fill: none; stroke: #111; flex: none; }
.apps { margin-left: 18px; display: flex; align-items: stretch; height: 40px; flex: none; }
.app-i { width: 40px; display: flex; align-items: center; justify-content: center; border-bottom: 2px solid #d9797c; margin-right: 9px; }
.app-i.act { width: 48px; background: #eceded; margin-right: 5px; }
.cadi { width: 24px; height: 24px; background: #1e5eaa; border: 1px solid #34465c; border-radius: 2px; color: #d6e6f8; font: bold 10px/22px "Liberation Mono", monospace; text-align: center; }
.tray { margin-left: auto; display: flex; align-items: center; height: 40px; flex: none; }
.ti-t { fill: none; stroke: #222; flex: none; }
.chev { margin-right: 9px; }
.tbx { margin-right: 7px; }
.tbx .dot { fill: #ff9a00; stroke: none; }
.wifi { margin-right: 7px; }
.vol { margin-right: 11px; }
.pen { margin-right: 11px; }
.ime { font-size: 14px; color: #111; margin-right: 5px; }
.clock { width: 70px; display: flex; flex-direction: column; align-items: center; font: 14px/19px "Noto Sans", sans-serif; color: #222; margin-right: 14px; }
.nt { margin-right: 24px; }
.nb { fill: #111; }
.nl { stroke: #fff; fill: none; }
```
